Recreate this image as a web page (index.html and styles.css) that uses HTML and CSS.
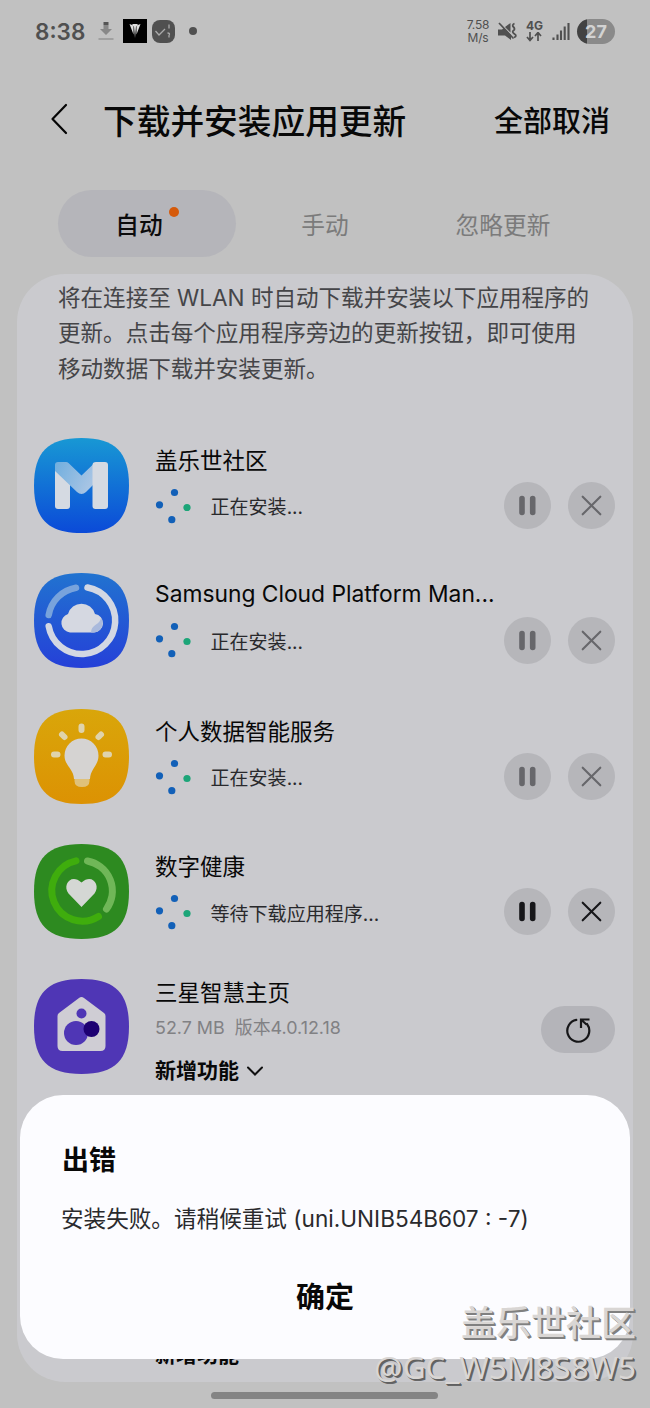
FILE: index.html
```html
<!DOCTYPE html>
<html lang="zh-CN">
<head>
<meta charset="utf-8">
<title>下载并安装应用更新</title>
<link rel="stylesheet" href="styles.css">
</head>
<body>
<svg width="0" height="0" class="defs">
  <defs>
    <linearGradient id="g-m" x1="0" y1="0" x2="0" y2="1"><stop offset="0" stop-color="#1898d4"/><stop offset="1" stop-color="#0b4ad8"/></linearGradient>
    <linearGradient id="g-c" x1="0" y1="0" x2="0" y2="1"><stop offset="0" stop-color="#2173d0"/><stop offset="1" stop-color="#2540d8"/></linearGradient>
    <linearGradient id="g-y" x1="0" y1="0" x2="0" y2="1"><stop offset="0" stop-color="#d9a60a"/><stop offset="1" stop-color="#dc9203"/></linearGradient>
    <linearGradient id="g-v" x1="0" y1="0" x2="1" y2="0.400"><stop offset="0" stop-color="#70aede"/><stop offset="1" stop-color="#a6c4e4"/></linearGradient>
    <symbol id="tile" viewBox="0 0 95 95"><path d="M47.500 0C81 0 95 14 95 47.500S81 95 47.500 95 0 81 0 47.500 14 0 47.500 0Z"/></symbol>
    <symbol id="dots" viewBox="0 0 36 36"><g fill="#1260b8"><circle cx="19.500" cy="4.500" r="3.600"/><circle cx="4.500" cy="16.800" r="3.600"/><circle cx="16.800" cy="31.700" r="3.600"/></g><circle cx="32" cy="19.500" r="3.600" fill="#1ca578"/></symbol>
    <symbol id="pause" viewBox="0 0 47 47"><path d="M18 16.500V30.500M28.700 16.500V30.500" stroke="currentColor" stroke-width="5.600" stroke-linecap="round"/></symbol>
    <symbol id="close" viewBox="0 0 47 47"><path d="M14.700 14.700L32.300 32.300M32.300 14.700L14.700 32.300" stroke="currentColor" stroke-width="2.100" stroke-linecap="round"/></symbol>
  </defs>
</svg>
<div class="screen">
  <header class="status">
    <span class="clock">8:38</span>
    <svg class="s-down" viewBox="0 0 16 20"><path d="M5.500 1h5v3h-5z" fill="#555"/><path d="M5.500 4h5v4H14L8 14 2 8h3.500z" fill="#888"/><path d="M.5 18h15" stroke="#999" stroke-width="1.600"/></svg>
    <svg class="s-app" viewBox="0 0 24 24"><path d="M0 0h24v24H0z" fill="#000"/><path d="M6.500 5l4 1.500v9zM17.500 5l-4 1.500v9zM9 5h6l-2 2.500-1 11.500-1-11.500z" fill="#ddd"/></svg>
    <svg class="s-check" viewBox="0 0 23 23"><rect width="23" height="23" rx="8" fill="#505050"/><path d="M3.500 11l3.500 4 6-6M17 4.500v4M15.500 13q3 0 1.500 2.500v2" fill="none" stroke="#aaa" stroke-width="1.300"/></svg>
    <i class="s-dot"></i>
    <span class="speed">7.58<br>M/s</span>
    <svg class="s-mute" viewBox="0 0 19 19"><path d="M0 7.500h4l2-1.500 7 7v5l-6-4.500H0zM7 5l5.500-4v9.500z" fill="#505050"/><path d="M1 1l14.500 15.500" stroke="#505050" stroke-width="1.700"/><path d="M16.500 1.500q-3 1.500-1 3.500t0 3.500 1 3.500-.500 3.500" fill="none" stroke="#505050" stroke-width="1.800"/></svg>
    <span class="net"><b>4G</b><svg viewBox="0 0 16 10"><path d="M4 0v8M1 5l3 3.500L7 5M12 9V1M9 4l3-3.500L15 4" fill="none" stroke="#505050" stroke-width="1.700"/></svg></span>
    <svg class="s-sig" viewBox="0 0 18 18"><path d="M1.500 15.500v2.500M5.500 12.500V18M9 8.500V18M12.700 4.500V18M16.500 1v17" stroke="#505050" stroke-width="2.100"/></svg>
    <span class="battery">27</span>
  </header>
  <div class="title-bar">
    <svg class="back" viewBox="0 0 18 32"><path d="M16 2L2.500 16 16 30" fill="none" stroke="#050505" stroke-width="2.200" stroke-linecap="round" stroke-linejoin="round"/></svg>
    <h1>下载并安装应用更新</h1>
    <span class="cancel">全部取消</span>
  </div>
  <nav class="tabs">
    <span class="tab active">自动<i class="badge"></i></span>
    <span class="tab">手动</span>
    <span class="tab">忽略更新</span>
  </nav>
  <main class="panel">
    <p class="intro">将在连接至 WLAN 时自动下载并安装以下应用程序的<br>更新。点击每个应用程序旁边的更新按钮，即可使用<br>移动数据下载并安装更新。</p>
    <section class="row">
      <svg class="icon" viewBox="0 0 95 95"><use href="#tile" fill="url(#g-m)"/><path d="M21 30L36 45V68q0 3-3 3h-9q-3 0-3-3z" fill="#d5dae2"/><path d="M24 24h8q1.500 0 2.500 1L47.500 37.500 60 25.500V46L52 54q-4.500 4-9 0L21 33V27q0-3 3-3z" fill="url(#g-v)"/><path d="M58.500 27q0-3 3.500-3h9q3 0 3 3v41q0 3-3 3h-9.500q-3 0-3-3z" fill="#d5dae2"/></svg>
      <div class="info"><h2>盖乐世社区</h2><div class="state"><svg class="dots"><use href="#dots"/></svg>正在安装...</div></div>
      <div class="actions dim"><button><svg><use href="#pause"/></svg></button><button><svg><use href="#close"/></svg></button></div>
    </section>
    <section class="row">
      <svg class="icon" viewBox="0 0 95 95"><use href="#tile" fill="url(#g-c)"/><g fill="none" stroke-width="6.500" stroke-linecap="round"><path d="M53.500 14.500A33.500 33.500 0 1 1 14.700 53.200" stroke="#d2d7e3"/><path d="M14.700 42A33.500 33.500 0 0 1 42 14.700" stroke="#78a3dc"/></g><path d="M36 59.500a9.500 9.500 0 0 1-2-18.500 14 14 0 0 1 27 0 9.300 9.300 0 0 1-1 18.500z" fill="#d5d8e1"/><path d="M67 45a9.300 9.300 0 0 1-7 14.500h-3q0-5 5-8 4-2.500 5-6.500z" fill="#a9b9dc"/></svg>
      <div class="info"><h2 class="latin">Samsung Cloud Platform Man...</h2><div class="state"><svg class="dots"><use href="#dots"/></svg>正在安装...</div></div>
      <div class="actions dim"><button><svg><use href="#pause"/></svg></button><button><svg><use href="#close"/></svg></button></div>
    </section>
    <section class="row">
      <svg class="icon" viewBox="0 0 95 95"><use href="#tile" fill="url(#g-y)"/><path d="M47.500 29.500a17 17 0 0 1 17 17c0 10-8 13-8.500 23.500H40c-.5-10.500-9.500-13.500-9.500-23.500a17 17 0 0 1 17-17z" fill="#d5d3d2"/><path d="M40.500 70h15v2q0 6-7.500 6t-7.500-6z" fill="#dfc17a"/><path d="M47.500 17.500v3.500M28 25.500l2.500 2.500M67 25.500L64.500 28M20 45.500h3.500M71.500 45.500H75" stroke="#dfd3ac" stroke-width="6" stroke-linecap="round"/></svg>
      <div class="info"><h2>个人数据智能服务</h2><div class="state"><svg class="dots"><use href="#dots"/></svg>正在安装...</div></div>
      <div class="actions dim"><button><svg><use href="#pause"/></svg></button><button><svg><use href="#close"/></svg></button></div>
    </section>
    <section class="row">
      <svg class="icon" viewBox="0 0 95 95"><use href="#tile" fill="#2d8a20"/><g fill="none" stroke-width="7" stroke-linecap="round"><path d="M42 16.800A30.500 30.500 0 1 0 64.500 72.500" stroke="#3fad0d"/><path d="M53.500 17A30.500 30.500 0 0 1 72.500 65" stroke="#70b758"/></g><path d="M47.500 63L34.500 49.500C28 41 37 29 47.500 38.500 58 29 67 41 60.500 49.500z" fill="#d4d7d4"/></svg>
      <div class="info"><h2>数字健康</h2><div class="state"><svg class="dots"><use href="#dots"/></svg>等待下载应用程序...</div></div>
      <div class="actions"><button><svg><use href="#pause"/></svg></button><button><svg><use href="#close"/></svg></button></div>
    </section>
    <section class="row detail">
      <svg class="icon" viewBox="0 0 95 95"><use href="#tile" fill="#4f36b5"/><path d="M45 19q2.500-2 5 0l20 15q1.500 1.200 1.500 3v30q0 5-5 5h-38q-5 0-5-5V37q0-1.800 1.500-3z" fill="#cfcdd4"/><circle cx="47.500" cy="34.500" r="5" fill="#4f36b5"/><circle cx="42" cy="54" r="12" fill="#4f36b5"/><circle cx="57.500" cy="50" r="8" fill="#1d0072"/></svg>
      <div class="info"><h2>三星智慧主页</h2><div class="meta">52.7 MB&nbsp; 版本4.0.12.18</div><div class="more">新增功能<svg viewBox="0 0 18 10"><path d="M2 1.500l7 7 7-7" fill="none" stroke="#111" stroke-width="2" stroke-linecap="round"/></svg></div></div>
      <button class="retry"><svg viewBox="0 0 26 26"><path d="M11.300 2.900A11 11 0 1 0 22 7" fill="none" stroke="#161618" stroke-width="2.200" stroke-linecap="round"/><path d="M16 11V2.500h8.500M16.500 3l5 4.500" fill="none" stroke="#161618" stroke-width="2.200"/></svg></button>
    </section>
    <section class="row"><div class="info tail"><div class="more">新增功能</div></div></section>
  </main>
  <div class="home-bar"></div>
  <div class="dialog" role="dialog">
    <h3>出错</h3>
    <p>安装失败。请稍候重试 <span>(uni.UNIB54B607 : -7)</span></p>
    <div class="ok">确定</div>
  </div>
  <div class="watermark"><b>盖乐世社区</b><span>@GC_W5M8S8W5</span></div>
</div>
</body>
</html>
```
FILE: styles.css
```css
* { box-sizing: border-box; }
body { margin: 0; background: #c1c1c1; font-family: "Inter", "Noto Sans CJK SC", sans-serif; color: #080808; }
h1, h2, h3, p { margin: 0; font-weight: 400; }
button { border: 0; padding: 0; color: inherit; display: block; }
svg { display: block; flex: none; }
.defs { position: absolute; }
.screen { position: relative; width: 650px; height: 1408px; overflow: hidden; display: flex; flex-direction: column; }

.status { height: 62px; padding: 0 35px; display: flex; align-items: center; color: #505050; flex: none; }
.clock { font-size: 22.500px; font-weight: 600; width: 63px; }
.s-down { width: 16px; height: 20px; }
.s-app { width: 24px; height: 24px; margin-left: 9px; }
.s-check { width: 23px; height: 23px; margin-left: 5px; }
.s-dot { width: 8px; height: 8px; border-radius: 50%; background: #505050; margin-left: 14px; }
.speed { margin-left: auto; font-size: 12px; line-height: 13.500px; text-align: center; width: 24px; margin-right: 8px; letter-spacing: -0.2px; }
.s-mute { width: 19px; height: 19px; margin-right: 9px; }
.net { width: 17px; font-size: 12px; line-height: 12px; margin-right: 9px; }
.net svg { width: 16px; height: 10px; }
.s-sig { width: 18px; height: 18px; margin-right: 7px; }
.battery { width: 38px; height: 25px; border-radius: 13px; background: linear-gradient(90deg, #424242 27%, #8a8a8a 27%); color: #d2d2d2; font-size: 18px; font-weight: 700; line-height: 25px; text-align: center; }

.title-bar { height: 114px; padding: 0 40px 0 50px; display: flex; align-items: center; flex: none; }
.back { width: 18px; height: 32px; }
h1 { font-size: 33.700px; font-weight: 500; margin-left: 35px; }
.cancel { margin-left: auto; font-size: 29px; font-weight: 500; }

.tabs { height: 98px; padding: 14px 58px 17px; display: flex; flex: none; }
.tab { position: relative; width: 178px; font-size: 23.700px; line-height: 72px; color: #7b7b7b; text-align: center; }
.tab.active { background: #b5b5ba; border-radius: 34px; color: #0b0b0c; font-weight: 500; padding-right: 16px; }
.badge { position: absolute; left: 111px; top: 17px; width: 10px; height: 10px; border-radius: 50%; background: #d55a0b; }

.panel { height: 1108px; margin: 0 17px; border-radius: 48px; background: #cacace; overflow: hidden; flex: none; }
.intro { padding: 6px 0 33px 41px; font-size: 22.550px; line-height: 35.300px; color: #454548; white-space: nowrap; }
.row { height: 135.400px; display: flex; padding: 0 18px 0 17px; }
.icon { width: 95px; height: 95px; margin: 19px 26px 0 0; }
.info { flex: 1; white-space: nowrap; padding-top: 27px; }
h2 { height: 30px; line-height: 30px; font-size: 22.500px; }
.latin { font-size: 22.800px; margin-top: -2px; margin-bottom: 2px; }
.state { height: 36px; margin-top: 12px; display: flex; align-items: center; font-size: 19.050px; color: #29292c; }
.latin + .state { margin-top: 13px; }
.dots { width: 36px; height: 36px; margin-right: 19.500px; }
.actions { display: flex; gap: 17.500px; padding-top: 63px; color: #17171a; }
.actions button { width: 47px; height: 47px; border-radius: 50%; background: #b6b6ba; }
.actions svg { width: 47px; height: 47px; }
.dim { color: #67676b; }
.detail { height: 283px; }
.detail .info { padding-top: 18px; }
.meta { height: 24px; line-height: 24px; margin-top: 8px; font-size: 17.900px; color: #818184; }
.more { height: 30px; line-height: 30px; margin-top: 16px; font-size: 21px; font-weight: 700; display: flex; align-items: center; gap: 7px; }
.more svg { width: 18px; height: 10px; }
.retry { width: 74px; height: 47px; margin-top: 46px; border-radius: 24px; background: #b4b4b9; display: flex; align-items: center; justify-content: center; }
.retry svg { width: 26px; height: 26px; }
.info.tail { padding: 81px 0 0 121px; }

.home-bar { width: 227px; height: 7px; margin: 10px 0 0 211px; border-radius: 4px; background: #848484; flex: none; }
.dialog { position: absolute; left: 20px; top: 1095px; width: 610px; height: 264px; border-radius: 43px; background: #fcfcff; padding: 46px 42px 0; }
.dialog h3 { font-size: 27px; line-height: 40px; font-weight: 700; }
.dialog p { font-size: 22.600px; line-height: 34px; margin: 21px 0 0 -1px; color: #2a2a2d; white-space: nowrap; }
.ok { font-size: 29px; line-height: 40px; font-weight: 700; text-align: center; margin-top: 42px; }
.watermark { position: absolute; right: 14px; top: 1297px; display: flex; flex-direction: column; align-items: flex-end; color: #d9d6d4; text-shadow: 1px 1px 0 #808080, 2px 2px 0 #808080; }
.watermark b { font: 500 35px/48px "Noto Sans CJK SC", sans-serif; }
.watermark span { font: 400 31.500px/44px "Noto Sans", sans-serif; text-shadow: 1px 1px 0 #606060, 2px 2px 0 #666; }
```
